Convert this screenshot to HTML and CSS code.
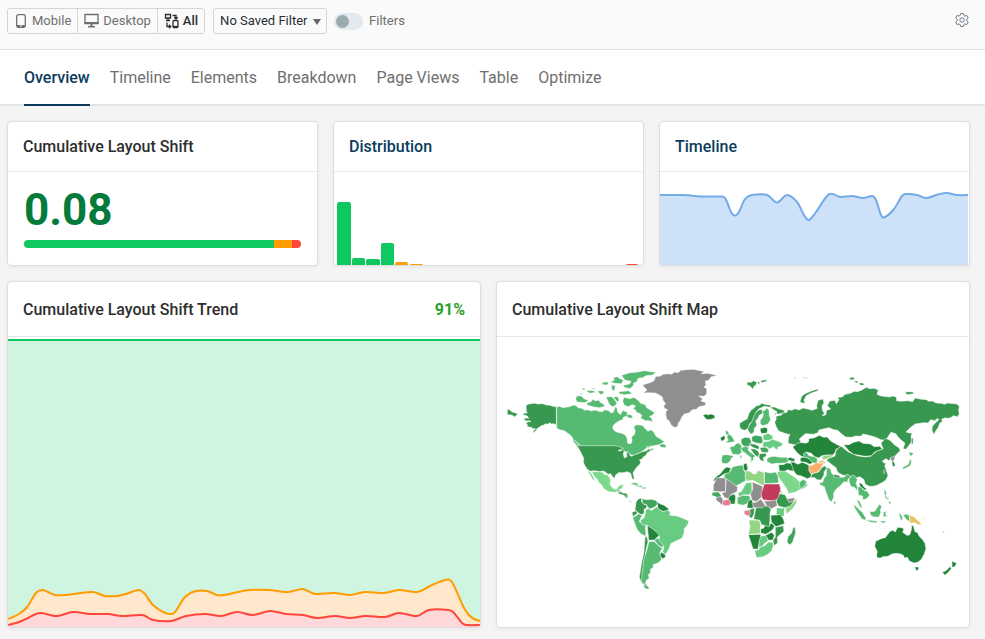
FILE: index.html
```html
<!DOCTYPE html>
<html lang="en">
<head>
  <meta charset="UTF-8">
  <meta name="viewport" content="width=device-width, initial-scale=1.0">
  <title>Cumulative Layout Shift</title>
  <link rel="stylesheet" href="styles.css">
</head>
<body>
  <header class="toolbar">
    <div class="device-group">
      <button type="button">
        <svg width="14" height="16" viewBox="-1 0 14 16"><rect x="1.7" y="1.7" width="8.6" height="12.6" rx="1.7" fill="none" stroke="currentColor" stroke-width="1.3"/><path d="M2 12h8v2H2z" fill="currentColor"/><path d="M5 13h2" stroke="#fff"/></svg>
        Mobile
      </button>
      <button type="button">
        <svg width="15" height="16" viewBox="0.5 0 15 16"><path d="M1.5 1.5h13v9h-13z" fill="none" stroke="currentColor" stroke-width="1.3"/><path d="M1 9h14v2H1zM7 11h2v2h2.5v1.5h-7V13H7z" fill="currentColor"/></svg>
        Desktop
      </button>
      <button type="button" class="active">
        <svg width="15" height="16" viewBox="0 0 15 16" fill="none" stroke="currentColor" stroke-width="1.3"><path d="M1.5 1.5h5v3.500h-5zM4 5v2.500M2 7.500h4M8.500 2.500h3.500v3M10.300 4.300L12 6l1.700-1.700M3 9.500v4h3.500M5 11.700l1.800 1.800L5 15.300"/><rect x="9" y="7.500" width="5" height="7" rx="1"/><path d="M9 13.500h5"/></svg>
        All
      </button>
    </div>
    <div class="saved-filter">
      <select aria-label="Saved filter"><option>No Saved Filter</option></select>
      <svg class="caret" width="8" height="6" viewBox="0 0 8 6"><path d="M0 0h8L4 6z" fill="#666"/></svg>
    </div>
    <label class="switch"><input type="checkbox"><span>Filters</span></label>
    <button type="button" class="settings" aria-label="Settings">
      <svg width="16" height="16" viewBox="0 0 16 16" fill="none" stroke="currentColor"><path d="M6.600 1.500h2.800l.4 1.900 1.200.7 1.900-.6 1.400 2.400-1.500 1.300v1.600l1.500 1.300-1.400 2.400-1.900-.6-1.200.7-.4 1.900H6.600l-.4-1.900-1.200-.7-1.900.6-1.400-2.400 1.500-1.300V7.200L1.700 5.900l1.400-2.400 1.900.6 1.200-.7z"/><circle cx="8" cy="8" r="2.200"/></svg>
    </button>
  </header>

  <nav class="tabs">
    <a href="#overview" class="active">Overview</a>
    <a href="#timeline">Timeline</a>
    <a href="#elements">Elements</a>
    <a href="#breakdown">Breakdown</a>
    <a href="#pageviews">Page Views</a>
    <a href="#table">Table</a>
    <a href="#optimize">Optimize</a>
  </nav>

  <main>
    <div class="row row-three">
      <section class="card">
        <h2>Cumulative Layout Shift</h2>
        <div class="score">
          <strong>0.08</strong>
          <div class="score-bar">
            <span class="good" style="width: 90.3%"></span>
            <span class="fair" style="width: 6.5%"></span>
            <span class="poor" style="width: 3.2%"></span>
          </div>
        </div>
      </section>
      <section class="card">
        <h2><a href="#breakdown">Distribution</a></h2>
        <svg class="chart small" viewBox="0 0 309 93" preserveAspectRatio="none">
          <g class="good-fill">
            <path d="M3 93V32q0-2 2-2h10q2 0 2 2v61z"/>
            <path d="M18 93v-5q0-2 2-2h9q2 0 2 2v5z"/>
            <path d="M32 93v-4q0-2 2-2h10q2 0 2 2v4z"/>
            <path d="M47 93V73q0-2 2-2h9q2 0 2 2v20z"/>
          </g>
          <path class="fair-fill" d="M61 93v-1q0-2 2-2h9q2 0 2 2v1zM76 93q0-1 2-1h9q2 0 2 1z"/>
          <path class="poor-fill" d="M292 93q0-1 2-1h8q2 0 2 1z"/>
        </svg>
      </section>
      <section class="card">
        <h2><a href="#timeline">Timeline</a></h2>
        <svg class="chart small" id="timelineChart" viewBox="0 0 309 93" preserveAspectRatio="none"></svg>
      </section>
    </div>

    <div class="row row-two">
      <section class="card tall">
        <h2>Cumulative Layout Shift Trend <span class="percent">91%</span></h2>
        <svg class="chart large" id="trendChart" viewBox="0 0 472 290" preserveAspectRatio="none"></svg>
      </section>
      <section class="card tall">
        <h2>Cumulative Layout Shift Map</h2>
        <svg class="chart large map" viewBox="497 337 472 290">
          <!-- North America -->
          <g transform="translate(500 360) scale(.3333)">
            <path class="g2" d="M22 147l8 3 6 6 9 2 9 4-5 4-5 5-5-4-5-2-12-1zM78 137l6-4 8-2 12-1 10 2 14-1 12 4 10 1 8 3 11 1v54l-10-3-6 1-4-4-6 5-6-2-5 4-9 2-5 5-7 4-3 6-10 8 3-8 6-6-9 0-4-5-6 1-7-4 1-5-5-4 8-4 8 0-5-3-11 1-6-7 8-2 7 1-3-6-7-3-6-1-2-4 8-2 6 0-3-4z"/>
            <path class="g4" d="M170 141l9-2 10 4 18-3 15-5 8 3 4 5 12 2 8 6 10-2 8 4 14-3 10 4 12 1 4-5 12 1 10 8 6-2 6-17 5 4 2 12 8 8 8-13 6 3 6 2 4 12-14 3-3 8-10 3-10 7-8 7-2 8 5 8 9 5 14 3 10 5 5 9 2 16 10 1 3-9-1-12 8-6 3-10-5-14 10-6 16 2 9 10 8 8 9-5 9 8 6 12 14 8 12 9-17 8-20 4-16 5-12 9-12 8-16 6-12-2-4-7-10-2-14-6-14-3H236l-5-4-3-8-7-8-3-12-8-10-9-6-8-6-12-2-11-5z"/>
            <path class="g4" d="M372 112l18 4 12-4 14 10 6 8 14 4 4 9 12 7 12 8-6 8-10 3 7 6 3 10-12-3-10 0-14-8 3-7-4-6-12-4-2-7-8-4 8-8-10-4-12 6-12-4-5-12zM230 107l14 1 8 8 13 5-10 7-24-2-4-8zM260 129l13-4 6-7 8 5 9-3 6 8 8 3 4 8-15 4-18-2-20-6zM364 46l26-8 24-2 18-4 36 5-10 8-20 2-10 6-14 2-3 10-10 4-1 8-10 9-18-4-2-6 18-4 6-8-18-3zM340 53l12-3 8 6 10 4-5 11-22-1-12-5 12-4zM318 110l17 0 8 8 8 12-6 8-9 2-9-9zM340 112l12-3 6 12-6 4zM356 95l30-3 11 9-23 3-16-3zM334 75l12 2-3 16-7-3zM258 91l22 1 8 5-20 3zM293 93l16-1 3 9-12 2zM306 67l20-1-4 9-14-1zM248 84l11 2-12 5zM276 84l10 1-6 4zM242 100l8 2-8 3zM380 162l16 4 3 9-16-2zM477 256l10-5 11 4 0 8-14-1zM443 271l14-6 6 2-16 8zM440 260l12-2-6 5zM224 240l10 9 7 6-7 0z"/>
            <path class="g2" d="M232 257h113l14 3 11 5-10 4-6 4 10-1 4-4 4 4-2 12 3 9 7-2 0-15 6 0 2 8 6 5 10-5 10-3 12-6 14-3 8-7 2 9-8 4-4 8-8 5-5 7-6 1 3 9-4 6-7 7-7 10-5 8 4 17-4 3-4-7-3-12-10-5-12 3-14 0-10 8-1 9-6-3-7-11-8 2-8-7-6-3-12 2-15-3-12 2-9-6-8-12-4-10 1-12z"/>
            <path class="g6" d="M276 335h22l10 2 7 8 6-2 8 11 3 7-2 12 5 8 8 7 8-2 6-9 14-4-5 13-9 2-6 8-10 1-16-2-15-10-4-9-9-8-5-10-9-8zM261 330l12 8 8 15 3 9-7-4-5-10z"/>
            <path class="g1" d="M352 395l10-1 3 5 10 0 8 4 0 12-7-3-5-7-12-2z"/>
            <path class="g4" d="M391 370l12-1 10 8-10-1zM406 378h10l0 3-8-1zM423 383l10-2 7 4-12 1zM350 391l7-3 4 2-5 5z"/>
          </g>
          <!-- Greenland and Europe -->
          <g transform="translate(640 360) scale(.3333)">
            <path class="none" d="M7 75l23-7 12-6 5-13 12 0 11-6 14-2 10 2 10-7 10 2 8-7 18-2 20-1 14 3 18 3-8 7 18-1 30 6-19 5-7 10-10 2 2 12-6 6 8 5 0 16-8 7-16-1 12 8-5 7 15 5-2 8-19 4-8 8-14 2-6 8-16 4-8 10-4 10-6 6-2 11-8 4-12-8-5-12-8-6-3-12 1-10 5-6-10-4-2-8 6-6-8-10-2-10-10-7-12-5-22-1-14 1 12-9z"/>
            <path class="g1" d="M189 166l9-4 6 3 8-3 12 4 1 8-11 4-12 1-6-4zM241 233l10-6 5 4-3 9-9 4zM361 205l17-3 5 6-2 11-16 2-4-8z"/>
            <path class="g2" d="M321 66l13 1 6-5 11 5-3 8-6 4-3 9-9-10-8-3zM350 66h9l0 8zM362 62l17-3 2 5-16 4zM299 190l11-7 12-7 4-14 7-11 8-6 9-8 10-2 4-5 16 4 14 2-5 6-16-3-16 7-8 9-7 20-6 11-8 6-2 12-12 7-10-3-5-8z"/>
            <path class="g3" d="M328 196l9-14 5-14 6-11 9-8 9-1 2 12-10 6-5 10-6 7 4 12-8 10-1 12-8 5-7-5-4-10z"/>
            <path class="g4" d="M366 151l8 1 6-9 7 8 1 16 4 13-9 13-15 4-7-6 0-10 7-9 2-9zM257 210l9 6 1 8 7 2 7 12 3 7-11 2-16 2 8-9-4-6 2-8-7-7z"/>
            <path class="g4" d="M269 261l13-2 6-8 8-2 10 9-3 8 2 13-10 5-17-1-4-8zM247 285l15-1 19 4-8 8-2 8-11 7-13-1-3-9z"/>
            <path class="g3" d="M303 238l12-6 14 1 4 9 1 9-8 9-14-1-8-8zM335 230l12-4 18 3 4 13-4 9-17-2-12-5zM359 263l18-2 9 8-2 9-19-1z"/>
            <path class="g5" d="M369 226l15-6 13 7 2 10-13 4-16 0zM369 246l18-2 10-6 14 4 17 8-3 8-12 4 2 7-10-3-4-6-12 7-9-7-12 1z"/>
            <path class="g4" d="M302 264l15-5 10 4-3 7 9 8 14 10-6 4-1 10-9 1 3-9-11-9-9-7-8-5z"/>
            <path class="g2" d="M326 252l16 0 15 6 0 10-9-2-10-4zM331 266l13 1 10 6 4 8-4 11-11-9zM358 281l19-1 3 8-10 5 2 11-9-2-6-9z"/>
            <path class="g4" d="M381 295l12-5 10-1 18 3 21 0 4 9-4 7-21 2-12 0-14 2-14-7zM300 286l5 0 0 9-4 0zM328 302l8 0-2 5z"/>
            <path class="g1" d="M416 314l14 0 10-5 13 1 8 14-2 10-17-5-9 6-15-1zM440 298l10-6 15 5-2 8-11-2z"/>
            <path class="g6" d="M411 336l13-3 14 1 14 10 15 9 8 9 11 7 5-8 9 5 3 10-10 9-14 4-12 7-22 5-4-13-8-12-9-13-9-11z"/>
            <path class="g4" d="M477 368l13-10 10 7-7 14-12 7zM462 53h5v3h-5zM488 53l14-1 0 3-12 0z"/>
          </g>
          <!-- Africa -->
          <g transform="translate(700 440) scale(.3333)">
            <path class="g4" d="M73 103l18-9 6-13 14-4 18-2 2 14 6 10 0 23-30 17-34-25zM193 95l18 4 16-3 7 11 2 22-43 2zM112 172l16-6 21 1 2 10-11 15-12 4-16-5z"/>
            <path class="g5" d="M113 160l12-6 13-25 17-2 1 28-10 10-18-1-9 7zM230 203l15 2 9-2-2 26-12 0-11-7zM177 289l23-3 5 17-13 8-5 9-10 2zM165 331l11-1 4-9 14-4 12-11 12 1 2 10-5 15-10 10-15 8-20 3-4-12z"/>
            <path class="g1" d="M61 101l11-14 8-6 13 3-6 14-15 4-14 10-6 8-14 4 10-14zM131 71l9-1 4 17-8 8-6-11zM84 171l7-5 13-4 3 9-2 21-19 0zM144 184l10-6 7 12-2 15-18-1zM212 226l29-2 9 12 4 15-26 9-14-14zM182 267l10-3 2-9 12 3 8-9 10 9-5 10-13 10-9 5-15-4zM197 286l18-9 8 8-4 15-13 1zM145 284l38-1-5 20-4 25-15-1-5-16zM236 148l6 3 4 9-6-3z"/>
            <path class="g2" d="M231 169l9-8 15 3 7 13 19 9-8 12-17 5-20-4-7-13zM167 206l5-9 33 1 8 10-3 12 0 21-2 19-23-6-6-13-18-3zM226 262l24-5 2 17-12 10-8 7 1 18-11 8-3-15 7-11zM148 209l16-6-2 19-6 13-9-4z"/>
            <path class="g3" d="M264 290l11-11 4-15 6-3 2 18-9 27-8 9-9-9zM37 157l19-1 9 13-11 7-8-7-10-2z"/>
            <path class="g7" d="M137 92l13 2 10 8 9-1 5-10 18 7 1 39-12-4-22-12-17 2-7-10zM147 240l31 1 4 15-2 25-35 2 5-22zM291 174l-2 16-12 18-17 14-4-17 13-6 13-14z"/>
            <path class="none" d="M50 113l27 1 0 40-14 1-23-1 0-18zM78 117l14 8 21 16-2 14-19 9-7 12-11-3-9-14 11-3zM157 126l31 13-2 31-16 15-14-4-5-19 7-13zM156 188l15-2 11-9 14 19-7 7-27 0zM192 183l21 0 14-6 5 20-17 9-15-9zM261 176l24-3-4 12-14 2zM47 174l15-5 9 13-4 15-8-9-9-6z"/>
            <path class="sudan" d="M193 132h45l4 14-6 23-7 11-18 2-23-3-5-18z"/>
            <path class="pink" d="M68 182l17-4 6 5-1 13-17 2-5-7zM132 213l16-4 3 11-4 9-14-6z"/>
          </g>
          <!-- Asia -->
          <g transform="translate(800 360) scale(.3333)">
            <path class="g2" d="M-91 142l14-1 14 6 15 4 2 7-19 4-12-4 6 11 16-4 2-6 14-2 2-8 12 2 10-5 12 4 12-6 14 3 14 4 15-6-2-8 4-16 15-4 3 12-6 8 1 13 6 10-6 7 10-2 3-14 12-4-10-10 7-14 16-2 4 10 8-12-4-7 14-1 8-8 16-3 12-6 10 1 14-6 12-7 10 4 14-1 12 5-4 13 12 5 26 3 9-3 11 3 1 11 12 2 24-2 12 3 7-11 20 4 14 1 8 5 10-1 12 6 16 1 8 3 10-4 28 3 7 7-2 12 2 10-5 9-13-3-6 5-8 3-12-1-9 4 3 6-9 6-4 12-8 11-5 11-6-13 1-12 8-9 11-10-3-5-9 7-12-3-8 10-14-1-24 4-14 10-14 14 10 3 8 0-3 11 3 13-8 12-10 13-9-2 6-16-16-14-12-15-14-4-8 12-7 12-15-2-18-8-22-6-14-3-6 7-16-1-12 4-18-1-12-9-12-11-12-2-14-6-14 3-16 4-3 8-14 5-24-2-18 16 5 10-4 9-12-1-23-5 2-19 4-7-16-4-18-7-8-14-4-12 5-10-2-12 4-10z"/>
            <path class="g2" d="M0 126l4-15 8-8 10-5 12-5 22-7-4 7-20 7-13 7-7 13 3 10-8-1zM148 54l12-3 5 7-14 2zM161 62l14 2-5 6zM177 69l12 0 5 6-13 1zM316 95l23 1 3 5-22 3zM335 235l5 0-1 18-5-2z"/>
            <path class="g1" d="M-22 261l16-12 14-1 10 2 8-5 0-9 18-3 14-7 12 6 12-1 10 12 16 9 16 8-16 8-2 8-8 10-14-1-18 2-10 7-12-4-10-10-14-4-5 4-2 13-10-5-12-10zM131 254l16 0 14-7 16-4 12 7 22 2 12 8 16-1 9 8-24 9-9 11-20 2-22-4-12-2-14-10z"/>
            <path class="g1" d="M-28 305l10 2 12 6 12-6 12 4 10 6-1 14 7 12-1 9-11 4-18-8-14-3-10-14zM0 296l10-6 12 3 20 13-13 7-12-6-15-2z"/>
            <path class="g4" d="M11 280l8-4 8 11 16 3 10 7-2 9 5 4-7 3-13-7-12-12-14-2z"/>
            <path class="g7" d="M65 292l9-6 25-1-4 6-16 6-9 2z"/>
            <path class="sand" d="M54 304l14-5 8 8-2 5-18-1z"/>
            <path class="peach" d="M27 317l13-3 8-6 12 2 10-3-2 9-6 10-8 10-20 6-7-11z"/>
            <path class="g2" d="M31 352l7-11 18-5 9-12 8-7 8 8-9 10 0 10-9 15-12-1-6-6z"/>
            <path class="g2" d="M79 301l8-6 18-7 2-12 4-9 13-8 11 9 9 7 17 8 13 5 22 3 17-2 8-8 9-7 20-8-4-8-3-9 14-14 13 6 14 14 13 8 4 9-10 9-6 9-12 4-6 8-9-6-11 7 6 7 6-1-5 9 5 12 5 17-7 14-13 8-16 8-10 2-10 0-12-6-5-15-12-8-14 5-18-6-20-4-14-8-5-14-7-5z"/>
            <path class="g4" d="M80 323l10 2 6 16 12 8 14 3 12-1 4-8 9 2 7 5-9 7-3 10-10-2-12 13-13 11-6 11 0 13-7 13-8-8-9-24-4-14-12-5-3-7 10-1 4-12 7-8z"/>
            <path class="g4" d="M147 358l9-12 8 1 8 12-4 11 5 12-3 11-5-10-13-4-4-12zM173 382l8-3 10 11 12 5 6 11-10 11-11 2 0-11-12-2z"/>
            <path class="g1" d="M177 368l9 3 6 10 10 7-8 2-14-11zM103 343l18 5-5 5-14-3zM275 304l7 1 4 12-7 3zM251 330l5 2-3 9-4-3z"/>
            <path class="none" d="M271 293l15-6-3 10-3 8-7-4z"/>
            <path class="g4" d="M307 323l9-5 7-3 5-10 3-10 4 11-6 13-10 4-9 5zM327 275l14 5-8 9-4-5zM252 387l6 7-2 13-4-8zM259 410l8 4-3 7z"/>
          </g>
          <!-- South America -->
          <g transform="translate(600 480) scale(.3333)">
            <path class="g2" d="M108 66l8-10 9-2-1 10 8 9 9 3-2 9-7 3 1 12-10 4-10-7-8-7zM96 97l13-5 3 8-13 10zM136 166l6 8 2 12-5 18-4 30-4 22-3 22 0 22 9 12 10 8-12-2-11-11-6-15 4-24 4-25 6-26 1-22zM132 312l6 4 12 11-12-1-7-7zM56 36l8-1 6 6 8-2 7 13-9-4-12-5z"/>
            <path class="g3" d="M126 56l12 3 18-1 13 4 5 8-9 11-13 5-8-3-4-9-12-3z"/>
            <path class="g1" d="M171 66l12 7 8 2 15 11-3 9-15-1-14-7zM142 137l14-1 14 12 8 7 3 11-9 5-8 9-18 1zM183 216l12 7 2 8-8 5-10-7z"/>
            <path class="g4" d="M98 112l9-4 10-7 10 6-5 7-4 11 12 5 8 5-2 13 2 10-2 11-14-8-10-12-7-16zM163 181l12-8 7 11 12 9-6 9-11-4zM147 185l15-1 15 14 10 7-7 12 0 11 6 9-10 11-17 6 1 9-9 5 1 9-7 8 3 10-9 6-3 12-11-7 0-19 4-23 2-24 7-21z"/>
            <path class="g5" d="M121 120l10-5 4-11 3-16 10-2 6 6 16-12 7 8 13 7 12-5 9 6-2 10 22 2 14 5 22 10-4 11-10 12-1 13-6 16-18 8-16 8-4 14-12 19-8-9 4-15-8-12-8-8 3-10-6-10-16-14-16-10-15-1z"/>
            <path class="g4" d="M92 8l16 0 13 9-12-1-12-5zM115 17l12 0 0 5-10 0zM130 22h9l-2 4-6 0zM84 62l9 1 4 5z"/>
          </g>
          <!-- Oceania -->
          <g transform="translate(820 470) scale(.3333)">
            <path class="g1" d="M167 214l19-9 10-2 8-11 6-8 9-3 7 5 7-14 13 1 6 4-4 10 13 9 8-1 5-15 1-16 6 6 4 15 8 3 4 10 10 10 8 12 3 16-5 15-8 16-11 10-12 2-14-6-6-11-9 2-3-8-8-4-14-2-12 2-12 7-15 1-8 4-10-1-1-10 2-8-8-16zM284 291h12l0 7-7 5zM396 273l5 3 9 3-5 11-9 2zM367 307l11-5 13-13 3 7-9 11-10 9zM41 92l6 5-3 9z"/>
            <path class="g4" d="M99 103l9 6 10 10 9 8 11 17-2 7-11-5-10-15-9-14zM137 151l15 0 19 3 0 5-21-3zM149 125l15-1 7-10 8-12 6 8-4 9 1 9-5 13-14 0-10-4zM110 89l9 5 9 20-8-3zM190 127l10-4-4 8 6 10-7-2-5 4zM237 128l8 7 3 13-6 3zM250 137l7-5 11 4 2 20-11-8zM194 59l6 9-2 8 4 12 0 4-7-11zM205 93l8 3-3 9zM178 154l20-2-7 8z"/>
            <path class="sand2" d="M269 136l13 4 10 10 14 13-11 1-10-6-15 2zM307 144l7 1-4 4z"/>
            <path class="none" d="M366 181l7 4-2 4z"/>
          </g>
        </svg>
      </section>
    </div>
  </main>

  <script src="charts.js"></script>
</body>
</html>
```
FILE: styles.css
```css
:root {
  --good: #10c860;
  --fair: #ff9d00;
  --poor: #ff463a;
  --navy: #0b3c5d;
  --border: #dedede;
}

* { box-sizing: border-box; }

body {
  margin: 0;
  background: #f4f4f4;
  color: #2e2e2e;
  font-family: Roboto, sans-serif;
}

a { color: inherit; text-decoration: none; }

button, select {
  font: inherit;
  color: inherit;
  cursor: pointer;
}

.toolbar {
  display: flex;
  align-items: flex-start;
  height: 50px;
  padding: 8px 15px 0 7px;
  background: #fafafa;
  border-bottom: 1px solid #e2e2e2;
  font-size: 13px;
  color: #6f6f6f;
}

.device-group {
  display: flex;
  margin-right: 8px;
  border: 1px solid #d5d5d5;
  border-radius: 3px;
}
.device-group button {
  display: flex;
  align-items: center;
  gap: 4px;
  height: 24px;
  padding: 0 6px 1px;
  border: 0;
  background: none;
}
.device-group button + button { border-left: 1px solid #d5d5d5; }
.device-group .active {
  color: #2b2f33;
  font-weight: 500;
}

.saved-filter {
  position: relative;
  margin-right: 7px;
}
.saved-filter select {
  height: 26px;
  padding: 0 18px 2px 6px;
  border: 1px solid #d5d5d5;
  border-radius: 3px;
  background: none;
  color: #2b2f33;
  appearance: none;
}
.caret {
  position: absolute;
  top: 11px;
  right: 6px;
  pointer-events: none;
}

.switch {
  display: flex;
  align-items: center;
  gap: 6px;
  height: 26px;
}
.switch span { padding-bottom: 2px; }
.switch input {
  width: 29px;
  height: 17px;
  margin: 0;
  padding: 2px;
  border-radius: 9px;
  background: #e4e9ed;
  appearance: none;
}
.switch input::before {
  content: "";
  display: block;
  width: 13px;
  height: 13px;
  border-radius: 50%;
  background: #9aaab1;
}
.switch input:checked::before { margin-left: 12px; }

.settings {
  display: flex;
  margin-left: auto;
  padding: 4px 0;
  border: 0;
  background: none;
  color: #6c7a89;
}

.tabs {
  display: flex;
  gap: 20px;
  height: 56px;
  padding: 0 24px;
  background: #fff;
  border-bottom: 2px solid #e4e4e4;
  font-size: 16px;
  line-height: 56px;
  color: #6f6f6f;
}
.tabs a { height: 56px; }
.tabs .active {
  color: var(--navy);
  font-weight: 500;
  border-bottom: 2px solid var(--navy);
}

main { padding: 15px 15px 11px 7px; }
.row {
  display: grid;
  gap: 15px;
}
.row-three { grid-template-columns: repeat(3, 1fr); }
.row-two {
  grid-template-columns: repeat(2, 1fr);
  margin-top: 15px;
}

.card {
  overflow: hidden;
  background: #fff;
  border: 1px solid var(--border);
  border-radius: 4px;
  box-shadow: 0 1px 4px rgba(0, 0, 0, 0.06);
}
.card h2 {
  display: flex;
  justify-content: space-between;
  height: 50px;
  margin: 0;
  padding: 0 15px;
  border-bottom: 1px solid #e8e8e8;
  font-size: 16px;
  font-weight: 500;
  line-height: 50px;
}
.card h2 a { color: var(--navy); }
.card.tall h2 {
  height: 55px;
  line-height: 55px;
}
.percent {
  color: #2ca02c;
  font-weight: 700;
}

.score { padding: 14px 16px; }
.score strong {
  display: block;
  color: #047a3b;
  font-size: 44px;
  line-height: 48px;
}
.score-bar {
  display: flex;
  height: 8px;
  margin-top: 6px;
  overflow: hidden;
  border-radius: 4px;
}
.good { background: var(--good); }
.fair { background: var(--fair); }
.poor { background: var(--poor); }

.chart {
  display: block;
  width: 100%;
}
.small { height: 93px; }
.large { height: 290px; }
.good-fill { fill: var(--good); }
.fair-fill { fill: var(--fair); }
.poor-fill { fill: var(--poor); }
.line {
  fill: none;
  stroke-width: 2;
  vector-effect: non-scaling-stroke;
}

.map path {
  stroke: #fff;
  stroke-width: 1.5;
  stroke-linejoin: round;
}
.g1 { fill: #238539; }
.g2 { fill: #38984f; }
.g3 { fill: #41a55d; }
.g4 { fill: #57ba72; }
.g5 { fill: #67cb81; }
.g6 { fill: #7cd98c; }
.g7 { fill: #92d584; }
.none { fill: #8f8f8f; }
.sudan { fill: #c23b5c; }
.pink { fill: #e87a93; }
.peach { fill: #fdae6b; }
.sand { fill: #e5cf85; }
.sand2 { fill: #e8c460; }
```
FILE: charts.js
```js
// draws a smooth line through the points, with the area below it filled
function drawArea(svg, points, height, stroke, fill) {
  let d = `M${points[0]}`;
  for (let i = 0; i < points.length - 1; i++) {
    const a = points[Math.max(i - 1, 0)];
    const b = points[i];
    const c = points[i + 1];
    const e = points[Math.min(i + 2, points.length - 1)];
    d += `C${b[0] + (c[0] - a[0]) / 6},${b[1] + (c[1] - a[1]) / 6} ${c[0] - (e[0] - b[0]) / 6},${c[1] - (e[1] - b[1]) / 6} ${c}`;
  }
  const last = points[points.length - 1][0];
  svg.innerHTML += `<path d="${d}L${last},${height}L${points[0][0]},${height}z" fill="${fill}"/>
    <path class="line" d="${d}" stroke="${stroke}"/>`;
}

const timeline = document.getElementById('timelineChart');
drawArea(timeline, [
  [0, 23], [24, 23], [40, 24.5], [58, 24.5], [65, 26], [71, 40], [75, 43.5], [79, 40],
  [85, 27], [92, 23], [107, 23], [117, 30.5], [127, 23], [137, 30], [144, 43], [149, 48],
  [156, 40], [167, 24], [173, 22], [180, 25], [192, 24], [203, 26], [212, 24], [216, 28],
  [221, 43], [225, 45], [234, 37], [242, 24], [247, 22], [257, 23], [266, 26], [278, 22.5],
  [287, 21], [297, 23], [308, 23]
], 93, '#73abe8', '#cde1f9');

const trend = document.getElementById('trendChart');
drawArea(trend, [[0, 3], [473, 3]], 290, '#10c860', '#cff4e0');
drawArea(trend, [
  [0, 282], [11, 277], [19, 270], [28, 256], [34, 253], [40, 255], [47, 258], [56, 258],
  [82, 255], [89, 256], [97, 259], [109, 259], [118, 257], [130, 253], [136, 256], [145, 268],
  [155, 275], [162, 277], [167, 275], [177, 260], [188, 254], [199, 254], [209, 258], [216, 258],
  [230, 255], [241, 253], [262, 253], [277, 255], [285, 254], [294, 252], [300, 254], [308, 257],
  [326, 256], [342, 258], [357, 255], [376, 256], [391, 253], [409, 255], [422, 249], [437, 243],
  [443, 244], [448, 253], [455, 269], [460, 277], [466, 282], [473, 284]
], 290, '#ff9d00', '#ffe8cb');
drawArea(trend, [
  [0, 288], [11, 285], [20, 281], [28, 277], [34, 276], [49, 279], [65, 275], [82, 277],
  [100, 277], [114, 279], [134, 278], [145, 283], [163, 284], [178, 279], [197, 277], [213, 279],
  [229, 275], [245, 278], [262, 274], [278, 277], [295, 278], [309, 281], [327, 279], [342, 281],
  [358, 279], [377, 280], [391, 276], [409, 279], [421, 273], [440, 273], [446, 276], [454, 286],
  [459, 288], [473, 288]
], 290, '#ff463a', '#ffd9d9');
```
